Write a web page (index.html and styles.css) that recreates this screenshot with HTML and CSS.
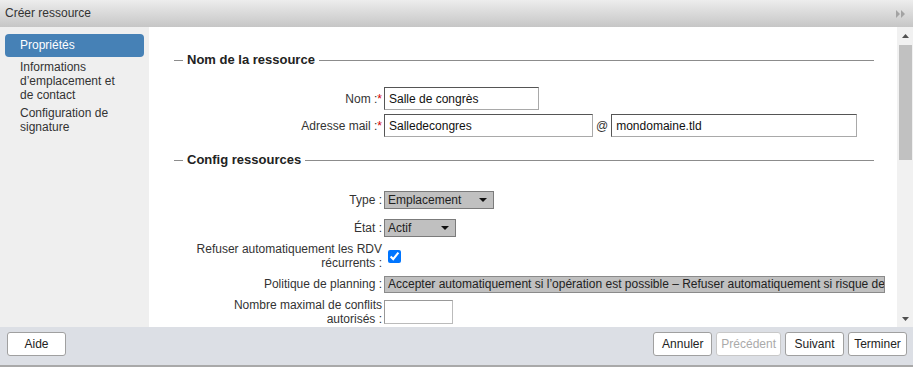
FILE: index.html
```html
<html>

<head>
    <meta http-equiv="Content-Type" content="text/html; charset=UTF-8">
    <link rel="stylesheet" href="styles.css">
</head>

<body>
    <div class="dialog">
        <header class="titlebar">
            <span class="title">Créer ressource</span>
            <svg class="expand-icon" width="10" height="8" viewBox="0 0 10 8">
                <path d="M0 0 L4 4 L0 8 Z M5 0 L9 4 L5 8 Z" fill="#a3a3a3" />
            </svg>
        </header>

        <div class="dialog-body">
            <ul class="steps">
                <li class="step step-active">Propriétés</li>
                <li class="step">Informations d’emplacement et de contact</li>
                <li class="step">Configuration de signature</li>
            </ul>

            <div class="content">
                <div class="group">
                    <div class="group-title"><span>Nom de la ressource</span></div>
                    <div class="row">
                        <label class="row-label">Nom :<span class="required">*</span></label>
                        <input class="text-input input-name" value="Salle de congrès">
                    </div>
                    <div class="row">
                        <label class="row-label">Adresse mail :<span class="required">*</span></label>
                        <input class="text-input input-mail" value="Salledecongres">
                        <span class="at">@</span>
                        <input class="text-input input-domain" value="mondomaine.tld">
                    </div>
                </div>

                <div class="group group-config">
                    <div class="group-title"><span>Config ressources</span></div>
                    <div class="row">
                        <label class="row-label">Type :</label>
                        <div class="select select-type">
                            <span>Emplacement</span>
                            <span class="select-arrow"></span>
                        </div>
                    </div>
                    <div class="row">
                        <label class="row-label">État :</label>
                        <div class="select select-state">
                            <span>Actif</span>
                            <span class="select-arrow"></span>
                        </div>
                    </div>
                    <div class="row">
                        <label class="row-label">Refuser automatiquement les RDV récurrents :</label>
                        <input class="checkbox" type="checkbox" checked>
                    </div>
                    <div class="row">
                        <label class="row-label">Politique de planning :</label>
                        <div class="policy">Accepter automatiquement si l’opération est possible – Refuser automatiquement si risque de conflit</div>
                    </div>
                    <div class="row">
                        <label class="row-label">Nombre maximal de conflits autorisés :</label>
                        <input class="text-input input-conflicts" value="">
                    </div>
                </div>
            </div>

            <div class="scrollbar">
                <div class="scroll-btn">
                    <svg width="7" height="4" viewBox="0 0 7 4"><path d="M0 4 L3.5 0 L7 4 Z" fill="#505050" /></svg>
                </div>
                <div class="scroll-track">
                    <div class="scroll-thumb"></div>
                </div>
                <div class="scroll-btn">
                    <svg width="7" height="4" viewBox="0 0 7 4"><path d="M0 0 L3.5 4 L7 0 Z" fill="#505050" /></svg>
                </div>
            </div>
        </div>

        <footer class="footer">
            <button class="button">Aide</button>
            <div class="footer-actions">
                <button class="button">Annuler</button>
                <button class="button" disabled>Précédent</button>
                <button class="button">Suivant</button>
                <button class="button">Terminer</button>
            </div>
        </footer>
    </div>
</body>

</html>
```

FILE: styles.css
```css
* {
    box-sizing: border-box;
}

body {
    margin: 0;
    font-family: "Liberation Sans", Arial, sans-serif;
    font-size: 12px;
    color: #333333;
}

.dialog {
    width: 913px;
    height: 367px;
    display: flex;
    flex-direction: column;
}

.titlebar {
    height: 27px;
    flex: none;
    display: flex;
    align-items: center;
    justify-content: space-between;
    padding: 0 7px 2px 5px;
    background: linear-gradient(#ededed, #c6c6c6);
}

.expand-icon {
    margin-top: 2px;
}

.dialog-body {
    flex: 1;
    display: flex;
    min-height: 0;
}

.steps {
    width: 149px;
    flex: none;
    margin: 0;
    padding: 7px 0 0;
    list-style: none;
    background: #efefef;
}

.step {
    margin: 0 5px;
    padding: 3px 25px 1px 15px;
    line-height: 14px;
}

.step-active {
    padding: 4px 25px 5px 15px;
    background: #4681b6;
    color: white;
    border-radius: 4px;
}

.content {
    flex: 1;
    overflow: hidden;
    padding: 25px 23px 0 25px;
    background: white;
}

.group + .group {
    margin-top: 13px;
}

.group-title {
    display: flex;
    align-items: center;
    margin-bottom: 17px;
    font-size: 13px;
    font-weight: bold;
    line-height: 16px;
    color: #222222;
}

.group-title::before {
    content: "";
    width: 9px;
    margin-right: 4px;
    border-top: 1px solid #8c8c8c;
}

.group-title::after {
    content: "";
    flex: 1;
    margin-left: 4px;
    border-top: 1px solid #8c8c8c;
}

.group-config .group-title {
    margin-bottom: 18px;
}

.row {
    display: flex;
    align-items: center;
    min-height: 27px;
    padding-left: 13px;
}

.group-config .row {
    min-height: 28px;
}

.row-label {
    width: 195px;
    flex: none;
    margin-right: 2px;
    text-align: right;
    line-height: 14px;
}

.required {
    color: #d40000;
}

.text-input {
    height: 23px;
    flex: none;
    margin: 0;
    padding: 0 4px;
    font: inherit;
    color: #111111;
    border: 1px solid;
    border-color: #555555 #a9a9a9 #a9a9a9 #555555;
    outline: none;
}

.input-name {
    width: 155px;
}

.input-mail {
    width: 209px;
}

.input-domain {
    width: 246px;
}

.input-conflicts {
    width: 69px;
    height: 24px;
    border-color: #999999 #bbbbbb #bbbbbb #999999;
}

.at {
    margin: 0 3px;
}

.select {
    display: flex;
    align-items: center;
    justify-content: space-between;
    flex: none;
    height: 18px;
    padding: 0 6px 0 3px;
    background: #c0c0c0;
    border: 1px solid #7b7b7b;
    color: #222222;
}

.select-type {
    width: 110px;
}

.select-state {
    width: 72px;
}

.select-arrow {
    width: 0;
    height: 0;
    border-left: 4px solid transparent;
    border-right: 4px solid transparent;
    border-top: 4px solid #111111;
}

.checkbox {
    margin: 0 0 0 4px;
}

.policy {
    width: 501px;
    height: 17px;
    flex: none;
    padding: 0 3px;
    line-height: 15px;
    white-space: nowrap;
    overflow: hidden;
    background: #c0c0c0;
    border: 1px solid #8a8a8a;
    color: #222222;
}

.scrollbar {
    width: 16px;
    flex: none;
    display: flex;
    flex-direction: column;
    background: #f1f1f1;
}

.scroll-btn {
    height: 17px;
    display: flex;
    align-items: center;
    justify-content: center;
}

.scroll-track {
    flex: 1;
    padding: 1px 1px 0 2px;
}

.scroll-thumb {
    height: 115px;
    background: #c1c1c1;
}

.footer {
    height: 40px;
    flex: none;
    display: flex;
    align-items: flex-start;
    padding: 5px 6px 0 7px;
    background: #dcdfe5;
    border-bottom: 2px solid #a9a9a9;
}

.footer-actions {
    display: flex;
    gap: 4px;
    margin-left: auto;
}

.button {
    height: 24px;
    min-width: 59px;
    padding: 0 4px;
    font: inherit;
    color: #222222;
    background: white;
    border: 1px solid #a0a0a0;
    border-radius: 3px;
}

.button:disabled {
    color: #aaaaaa;
    border-color: #c8c8c8;
}
```
